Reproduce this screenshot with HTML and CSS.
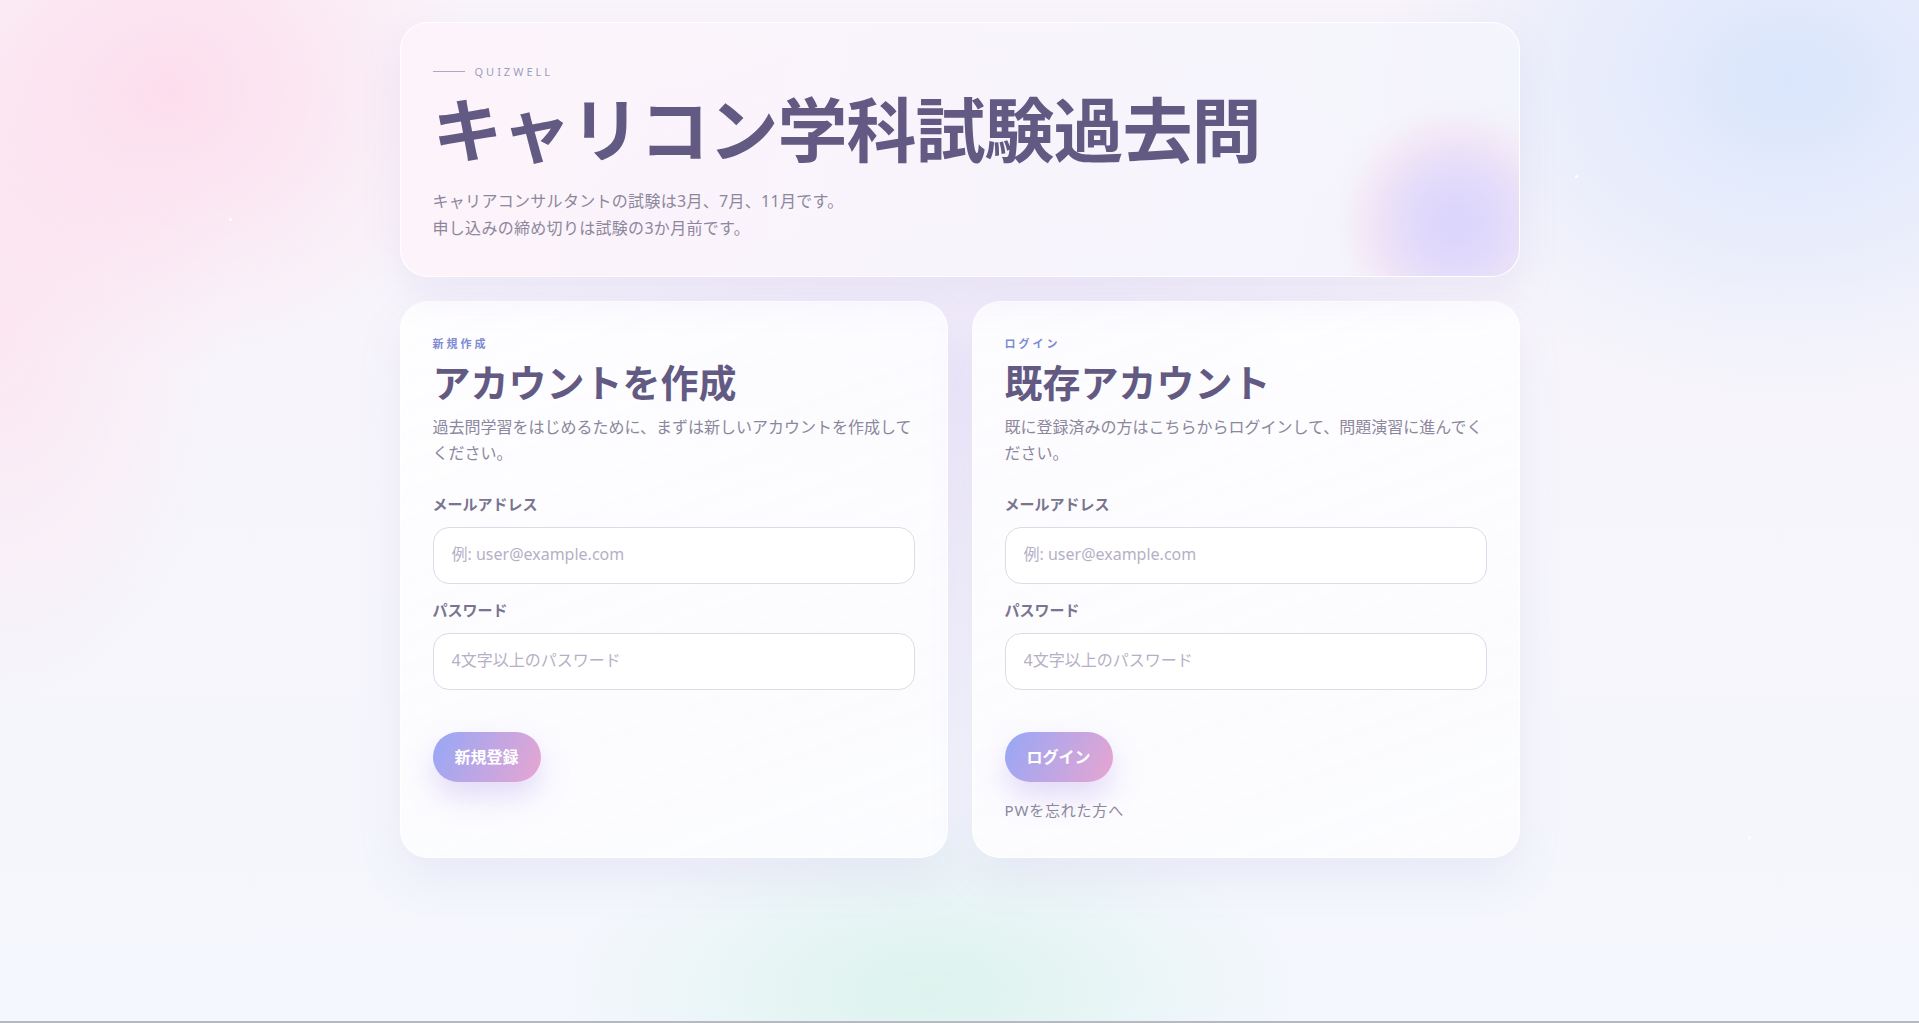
FILE: index.html
```html
<!DOCTYPE html>
<html lang="ja">
<head>
    <meta charset="UTF-8">
    <meta name="viewport" content="width=device-width, initial-scale=1.0">
    <title>キャリコン学科試験過去問 | QUIZWELL</title>
    <link rel="stylesheet" href="styles.css">
</head>
<body>
    <div class="page">
        <span class="sparkle s1"></span>
        <span class="sparkle s2"></span>
        <span class="sparkle s3"></span>

        <div class="container">
            <div class="hero">
                <div class="hero-orb"></div>
                <div class="brand">QUIZWELL</div>
                <h1>キャリコン学科試験過去問</h1>
                <p class="hero-text">キャリアコンサルタントの試験は3月、7月、11月です。<br>申し込みの締め切りは試験の3か月前です。</p>
            </div>

            <div class="auth-grid">
                <div class="card">
                    <div class="card-eyebrow">新規作成</div>
                    <h2>アカウントを作成</h2>
                    <p class="card-text">過去問学習をはじめるために、まずは新しいアカウントを作成してください。</p>
                    <label class="field-label" for="signupEmail">メールアドレス</label>
                    <input class="field-input" type="email" id="signupEmail" placeholder="例: user@example.com">
                    <label class="field-label" for="signupPassword">パスワード</label>
                    <input class="field-input" type="password" id="signupPassword" placeholder="4文字以上のパスワード">
                    <div class="actions">
                        <button class="btn" onclick="signup()">新規登録</button>
                    </div>
                </div>

                <div class="card">
                    <div class="card-eyebrow">ログイン</div>
                    <h2>既存アカウント</h2>
                    <p class="card-text">既に登録済みの方はこちらからログインして、問題演習に進んでください。</p>
                    <label class="field-label" for="loginEmail">メールアドレス</label>
                    <input class="field-input" type="email" id="loginEmail" placeholder="例: user@example.com">
                    <label class="field-label" for="loginPassword">パスワード</label>
                    <input class="field-input" type="password" id="loginPassword" placeholder="4文字以上のパスワード">
                    <div class="actions">
                        <button class="btn" onclick="login()">ログイン</button>
                    </div>
                    <a class="forgot" href="#">PWを忘れた方へ</a>
                </div>
            </div>
        </div>
    </div>

    <script>
        // 新規登録
        function signup() {
            const email = document.getElementById('signupEmail').value;
            console.log('signup:', email);
        }

        // ログイン
        function login() {
            const email = document.getElementById('loginEmail').value;
            console.log('login:', email);
        }
    </script>
</body>
</html>
```

FILE: styles.css
```css
* { margin: 0; padding: 0; box-sizing: border-box; }
body {
    font-family: "Noto Sans", "Noto Sans CJK JP", sans-serif;
    color: #625a82;
    background:
        radial-gradient(ellipse 440px 400px at 170px 90px, rgba(253, 220, 236, 0.95), transparent 70%),
        radial-gradient(ellipse 320px 540px at 0 330px, rgba(252, 228, 240, 0.85), transparent 70%),
        radial-gradient(ellipse 600px 460px at 1790px 80px, rgba(216, 229, 252, 0.95), transparent 70%),
        radial-gradient(ellipse 520px 260px at 930px 990px, rgba(214, 242, 234, 0.8), transparent 70%),
        radial-gradient(ellipse 820px 520px at 960px 380px, rgba(238, 232, 250, 0.8), transparent 70%),
        linear-gradient(180deg, #f9f4fa, #f4f7fd);
}
.page { position: relative; min-height: 100vh; padding-top: 22px; border-bottom: 2px solid #b6bac0; }
.container { max-width: 1120px; margin: 0 auto; }

.sparkle { position: absolute; width: 3px; height: 3px; border-radius: 50%; background: rgba(255, 255, 255, 0.95); }
.s1 { left: 229px; top: 218px; }
.s2 { left: 1575px; top: 175px; }
.s3 { left: 1748px; top: 836px; }

.hero {
    position: relative;
    overflow: hidden;
    padding: 39px 32px 34px;
    border-radius: 28px;
    border: 1px solid rgba(255, 255, 255, 0.95);
    background: linear-gradient(100deg, rgba(253, 243, 250, 0.92), rgba(243, 245, 253, 0.92));
    box-shadow: 0 18px 40px rgba(160, 140, 210, 0.12);
}
.hero-orb {
    position: absolute;
    left: 950px;
    top: 95px;
    width: 210px;
    height: 210px;
    border-radius: 50%;
    background: radial-gradient(circle, rgba(214, 208, 252, 0.95) 0%, rgba(222, 212, 249, 0.75) 38%, rgba(244, 218, 238, 0.5) 62%, rgba(248, 230, 244, 0) 85%);
    filter: blur(14px);
}
.brand { position: relative; display: flex; align-items: center; gap: 10px; height: 18px; font-size: 11px; letter-spacing: 3px; color: #9c9dbd; }
.brand::before { content: ""; width: 32px; height: 1px; background: #a9a9c6; }
.hero h1 { position: relative; margin-top: 12px; font-size: 70px; line-height: 77px; font-weight: 700; letter-spacing: -1px; color: #625a82; }
.hero-text { position: relative; margin-top: 19px; font-size: 16px; line-height: 27px; letter-spacing: 0.3px; color: #8c879c; }

.auth-grid { display: grid; grid-template-columns: 1fr 1fr; gap: 24px; margin-top: 24px; }
.card {
    padding: 32px 32px 36px;
    border-radius: 28px;
    border: 1px solid rgba(255, 255, 255, 0.85);
    background: linear-gradient(160deg, rgba(255, 255, 255, 0.82), rgba(252, 252, 255, 0.92));
    box-shadow: 0 20px 45px rgba(150, 140, 210, 0.12);
}
.card-eyebrow { font-size: 11px; line-height: 20px; font-weight: 700; letter-spacing: 3px; color: #7d8bd1; }
.card h2 { margin-top: 5px; font-size: 38px; line-height: 46px; font-weight: 700; color: #625a82; }
.card-text { margin-top: 9px; font-size: 16px; line-height: 26px; color: #8c879c; }
.field-label { display: block; margin-top: 15px; font-size: 15px; line-height: 22px; font-weight: 700; color: #7a7490; }
.card-text + .field-label { margin-top: 27px; }
.field-input {
    display: block;
    width: 100%;
    height: 57px;
    margin-top: 12px;
    padding: 0 18px 4px;
    border: 1px solid #dddbe7;
    border-radius: 16px;
    background: #fff;
    font-family: inherit;
    font-size: 16px;
    color: #625a82;
    outline: none;
}
.field-input::placeholder { color: #b5b0c6; }
.actions { margin-top: 42px; }
.btn {
    height: 50px;
    padding: 0 22px 3px;
    border: none;
    border-radius: 25px;
    background: linear-gradient(115deg, #97a7f6, #e7a5d1);
    color: #fff;
    font-family: inherit;
    font-size: 16px;
    font-weight: 700;
    cursor: pointer;
    box-shadow: 0 14px 30px rgba(170, 140, 230, 0.3);
}
.forgot { display: block; margin-top: 17px; font-size: 15px; line-height: 22px; letter-spacing: 0.8px; color: #8c879c; text-decoration: none; }
```
